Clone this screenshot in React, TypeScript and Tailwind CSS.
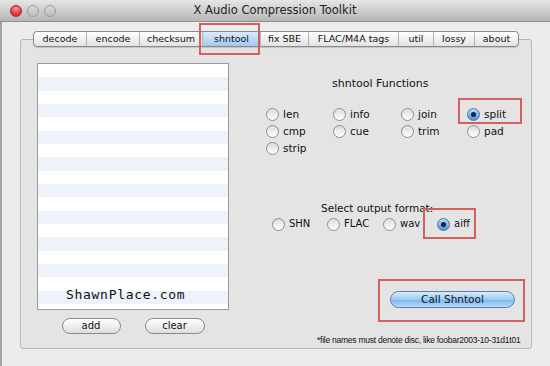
import React from "react";

const UI = "[font-family:'DejaVu_Sans',sans-serif]";

const tabs = [
  { label: "decode", w: "w-[52px]" },
  { label: "encode", w: "w-[53px]" },
  { label: "checksum", w: "w-[63px]" },
  { label: "shntool", w: "w-[58px]", active: true },
  { label: "fix SBE", w: "w-[48px]" },
  { label: "FLAC/M4A tags", w: "w-[90px]" },
  { label: "util", w: "w-[35px]" },
  { label: "lossy", w: "w-[41px]" },
  { label: "about", w: "w-[44px]" },
];

function Radio({ label, checked }: { label: string; checked?: boolean }) {
  return (
    <span className="flex items-center gap-[4px]">
      <span
        className={`flex h-[13px] w-[13px] flex-shrink-0 items-center justify-center rounded-full border ${
          checked
            ? "border-[#4f74a6] bg-gradient-to-b from-[#b9dbf8] to-[#4b90dc]"
            : "border-[#8f8f8f] bg-gradient-to-b from-[#dcdcdc] to-[#ffffff]"
        }`}
      >
        {checked && <span className="h-[5px] w-[5px] rounded-full bg-[#17263a]" />}
      </span>
      <span>{label}</span>
    </span>
  );
}

function Pill({ label, w }: { label: string; w: string }) {
  return (
    <button
      className={`flex h-[16px] ${w} items-center justify-center rounded-full border border-[#8a8a8a] bg-gradient-to-b from-[#ffffff] to-[#dedede] text-[10px] leading-none text-[#111]`}
    >
      {label}
    </button>
  );
}

export default function App() {
  return (
    <div className={`relative h-[366px] w-[550px] overflow-hidden bg-[#ececec] text-[#111] ${UI}`}>
      {/* Title bar */}
      <div className="relative flex h-[22px] items-center border-b border-[#8e8e8e] bg-gradient-to-b from-[#e6e6e6] to-[#b6b6b6]">
        <div className="ml-[10px] flex gap-[5px]">
          <span className="h-[12px] w-[12px] rounded-full border border-[#a3302c] bg-[radial-gradient(circle_at_50%_30%,#ff9a94,#dc3b34_60%,#b8221c)]" />
          <span className="h-[12px] w-[12px] rounded-full border border-[#9c9c9c] bg-gradient-to-b from-[#d8d8d8] to-[#bdbdbd]" />
          <span className="h-[12px] w-[12px] rounded-full border border-[#9c9c9c] bg-gradient-to-b from-[#d8d8d8] to-[#bdbdbd]" />
        </div>
        <div className="absolute inset-0 flex items-center justify-center text-[11.5px] leading-none text-[#222]">
          X Audio Compression Toolkit
        </div>
      </div>

      {/* Window body */}
      <div className="flex h-[344px] flex-col border-l-2 border-[#a4a4a4] pl-[18px] pt-[17px]">
        <div className="flex h-[310px] w-[512px] flex-shrink-0 flex-col rounded-[3px] border border-[#b8b8b8] bg-[#e4e4e4]">
          {/* Tabs */}
          <div className="-mt-[9px] ml-[12px] flex h-[16px] w-fit flex-shrink-0 overflow-hidden rounded-[4px] border border-[#8a8a8a] bg-gradient-to-b from-[#ffffff] to-[#e2e2e2] shadow-[0_1px_1px_rgba(0,0,0,0.15)]">
            {tabs.map((t, i) => (
              <div
                key={t.label}
                className={`flex h-full ${t.w} items-center justify-center text-[9.5px] leading-none ${
                  i > 0 ? "border-l border-[#b4b4b4]" : ""
                } ${t.active ? "bg-gradient-to-b from-[#d9ebfc] to-[#a3c9f1]" : ""}`}
              >
                {t.label}
              </div>
            ))}
          </div>

          <div className="mt-[16px] flex flex-shrink-0">
            {/* File list */}
            <div className="ml-[16px] flex w-[192px] flex-col">
              <div className="flex h-[247px] flex-col justify-end border border-[#9b9b9b] bg-[repeating-linear-gradient(to_bottom,#ffffff_0px,#ffffff_13.33px,#edf2fb_13.33px,#edf2fb_26.67px)] pb-[6px] pl-[28px]">
                <span className="text-[13px] leading-[16px] tracking-[0.7px] text-[#111] [font-family:'DejaVu_Sans_Mono',monospace]">
                  ShawnPlace.com
                </span>
              </div>
              <div className="mt-[8px] flex justify-center gap-[24px]">
                <Pill label="add" w="w-[59px]" />
                <Pill label="clear" w="w-[60px]" />
              </div>
            </div>

            {/* shntool options */}
            <div className="ml-[16px] flex w-[286px] flex-col text-[10.5px]">
              <div className="ml-[87px] mt-[14px] text-[11px] leading-[14px]">shntool Functions</div>
              <div className="ml-[21px] mt-[15px] grid grid-cols-[67px_68px_66px_60px] leading-[17px]">
                <Radio label="len" />
                <Radio label="info" />
                <Radio label="join" />
                <Radio label="split" checked />
                <Radio label="cmp" />
                <Radio label="cue" />
                <Radio label="trim" />
                <Radio label="pad" />
                <Radio label="strip" />
              </div>

              <div className="ml-[76px] mt-[44px] leading-[14px]">Select output format:</div>
              <div className="ml-[27px] mt-[1px] grid grid-cols-[55px_56px_54px_60px] text-[10px] leading-[16px]">
                <Radio label="SHN" />
                <Radio label="FLAC" />
                <Radio label="wav" />
                <Radio label="aiff" checked />
              </div>

              <button className="ml-[145px] mt-[59px] flex h-[17px] w-[125px] items-center justify-center rounded-full border border-[#5d80aa] bg-[linear-gradient(to_bottom,#d6ebfc_0%,#9ccbf3_50%,#7fb8ec_55%,#b5dcfa_100%)] text-[10.5px] leading-none text-[#111]">
                Call Shntool
              </button>

              <div className="ml-[72px] mt-[26px] whitespace-nowrap text-[8.5px] leading-[12px] tracking-[-0.25px] [font-family:'Liberation_Sans',sans-serif]">
                *file names must denote disc, like foobar2003-10-31d1t01
              </div>
            </div>
          </div>
        </div>
      </div>

      {/* Annotation highlights */}
      <div className="absolute left-[199px] top-[23px] h-[32px] w-[61px] border-2 border-[#d45f5c]" />
      <div className="absolute left-[458px] top-[98px] h-[26px] w-[64px] border-2 border-[#d45f5c]" />
      <div className="absolute left-[423px] top-[208px] h-[31px] w-[53px] border-2 border-[#d45f5c]" />
      <div className="absolute left-[378px] top-[279px] h-[43px] w-[147px] border-2 border-[#d45f5c]" />
    </div>
  );
}
